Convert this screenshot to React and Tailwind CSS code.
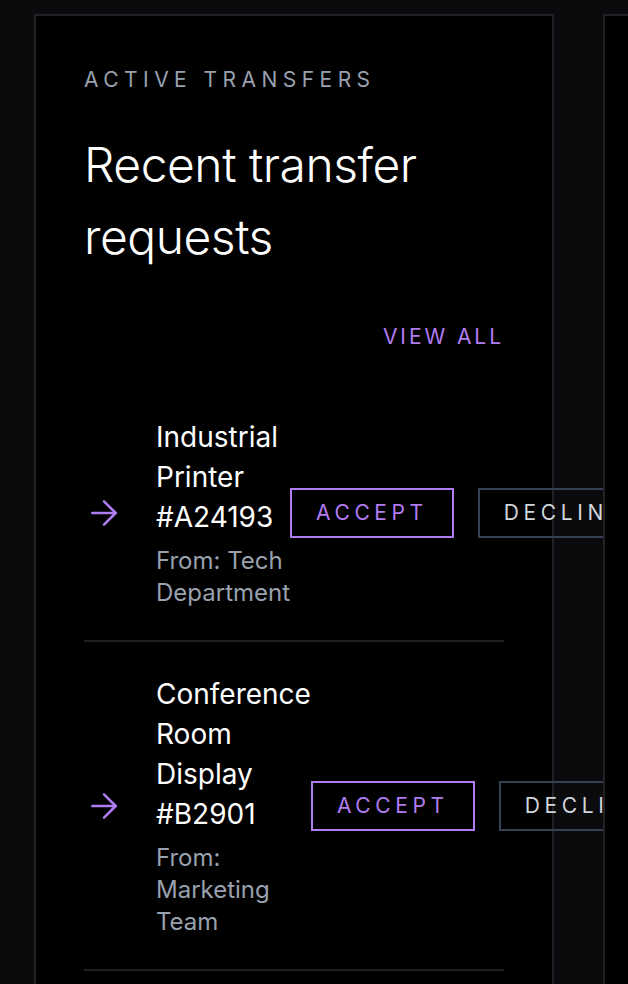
import React from 'react';
import { ArrowRight } from 'lucide-react';

// Mock data
const TRANSFERS = [
    { id: 1, name: 'Industrial Printer #A24193', from: 'Tech Department' },
    { id: 2, name: 'Conference Room Display #B2901', from: 'Marketing Team' },
    { id: 3, name: 'Workstation Laptop #C77310', from: 'Finance Office' },
];

const TransferRow = ({ item }) => (
    <div className="flex items-center justify-between pt-[32px] pb-[31px] border-b-2 border-[#1f1f23]">
        <div className="flex items-center gap-8">
            <ArrowRight size={40} strokeWidth={1.5} className="shrink-0 text-[#b07cf2]" />
            <div>
                <p className="text-[28px] leading-[40px] text-white">{item.name}</p>
                <p className="mt-[8px] text-[24px] leading-[32px] text-[#99a1af]">From: {item.from}</p>
            </div>
        </div>
        <div className="flex shrink-0 gap-6">
            <button className="whitespace-nowrap border-2 border-[#b07cf2] px-6 py-[7px] text-[21px] leading-[32px] tracking-[0.22em] text-[#b07cf2]">
                ACCEPT
            </button>
            <button className="whitespace-nowrap border-2 border-[#364153] px-6 py-[7px] text-[21px] leading-[32px] tracking-[0.22em] text-[#d1d5dc]">
                DECLINE
            </button>
        </div>
    </div>
);

export default function App() {
    return (
        <div className="h-screen w-screen overflow-hidden bg-[#0b0b0e] font-['Inter',sans-serif]">
            <div className="flex gap-[49px] pl-[34px] pt-[14px]">

                {/* Active transfers */}
                <section className="w-[520px] shrink-0 border-2 border-[#222226] bg-black px-12 pt-12 pb-12">
                    <p className="text-[21px] leading-[31.5px] tracking-[0.26em] text-[#99a1af]">ACTIVE TRANSFERS</p>
                    <h2 className="mt-[33px] text-[48px] leading-[72px] font-light tracking-[-0.01em] text-white">Recent transfer requests</h2>
                    <div className="mt-12 flex justify-end">
                        <a className="text-[21px] leading-[31.5px] tracking-[0.14em] text-[#b07cf2]">VIEW ALL</a>
                    </div>
                    <div className="mt-[33px]">
                        {TRANSFERS.map(item => <TransferRow key={item.id} item={item} />)}
                    </div>
                </section>

                {/* Next panel */}
                <section className="relative w-[520px] shrink-0 border-2 border-[#222226] bg-black px-12 pt-12">
                    <p className="text-[21px] leading-[31.5px] tracking-[0.26em] text-[#99a1af]">INVENTORY</p>
                    <h2 className="mt-[33px] text-[48px] leading-[72px] font-light text-white">Stock overview</h2>
                </section>
            </div>
        </div>
    );
}
